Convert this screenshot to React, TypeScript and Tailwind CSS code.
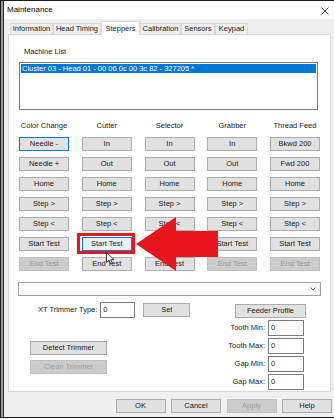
import React from 'react';

type BtnState = 'normal' | 'disabled' | 'focus' | 'hover';

interface BtnProps {
  label: string;
  state?: BtnState;
  className?: string;
}

// Classic WinForms push button, scaled down
const Btn: React.FC<BtnProps> = ({ label, state = 'normal', className = 'w-[50px] h-[14px]' }) => {
  const look =
    state === 'disabled'
      ? 'bg-[#cccccc] border-[#bfbfbf] text-[#9a9a9a]'
      : state === 'focus'
        ? 'bg-[#e1e1e1] border-[#0078d7] text-[#1a1a1a]'
        : state === 'hover'
          ? 'bg-[#e5f1fb] border-[#0078d7] text-[#1a1a1a]'
          : 'bg-[#e1e1e1] border-[#adadad] text-[#1a1a1a]';
  return (
    <div className={`${className} ${look} shrink-0 flex items-center justify-center border leading-none whitespace-nowrap`}>
      {label}
    </div>
  );
};

const TextBox: React.FC<{ value: string; className?: string }> = ({ value, className = 'w-[36px] h-[16px]' }) => (
  <div className={`${className} shrink-0 flex items-center border border-[#7a7a7a] bg-white pl-[2px] leading-none`}>{value}</div>
);

const columns: { title: string; items: { label: string; state?: BtnState }[] }[] = [
  {
    title: 'Color Change',
    items: [
      { label: 'Needle -', state: 'focus' },
      { label: 'Needle +' },
      { label: 'Home' },
      { label: 'Step >' },
      { label: 'Step <' },
      { label: 'Start Test' },
      { label: 'End Test', state: 'disabled' },
    ],
  },
  {
    title: 'Cutter',
    items: [
      { label: 'In' },
      { label: 'Out' },
      { label: 'Home' },
      { label: 'Step >' },
      { label: 'Step <' },
      { label: 'Start Test', state: 'hover' },
      { label: 'End Test' },
    ],
  },
  {
    title: 'Selector',
    items: [
      { label: 'In' },
      { label: 'Out' },
      { label: 'Home' },
      { label: 'Step >' },
      { label: 'Step <' },
      { label: 'Start Test' },
      { label: 'End Test' },
    ],
  },
  {
    title: 'Grabber',
    items: [
      { label: 'In' },
      { label: 'Out' },
      { label: 'Home' },
      { label: 'Step >' },
      { label: 'Step <' },
      { label: 'Start Test' },
      { label: 'End Test', state: 'disabled' },
    ],
  },
  {
    title: 'Thread Feed',
    items: [
      { label: 'Bkwd 200' },
      { label: 'Fwd 200' },
      { label: 'Home' },
      { label: 'Step >' },
      { label: 'Step <' },
      { label: 'Start Test' },
      { label: 'End Test', state: 'disabled' },
    ],
  },
];

const tabs = [
  { label: 'Information', w: 'w-[43px]' },
  { label: 'Head Timing', w: 'w-[48px]' },
  { label: 'Steppers', w: 'w-[39px]', active: true },
  { label: 'Calibration', w: 'w-[41px]' },
  { label: 'Sensors', w: 'w-[34px]' },
  { label: 'Keypad', w: 'w-[33px]' },
];

export default function App() {
  return (
    <div className="relative w-[334px] h-[419px] bg-white font-['Liberation_Sans',Arial,sans-serif] text-[7.5px] text-[#1a1a1a]">
      {/* window frame */}
      <div className="w-[334px] h-[418px] flex flex-col border-t border-b border-l border-[#1a1a1a] pl-[2px] bg-[#9a9a9a]">
        <div className="flex-1 flex flex-col border-l border-[#2a2a2a] bg-[#f0f0f0]">
          {/* title bar */}
          <div className="h-[18px] flex items-center justify-between bg-white pl-[3px] pr-[5px]">
            <span className="text-[8px] text-black">Maintenance</span>
            <svg width="8" height="8" viewBox="0 0 8 8" className="mt-[1px]">
              <path d="M0.5 0.5 L7.5 7.5 M7.5 0.5 L0.5 7.5" stroke="#333" strokeWidth="0.9" />
            </svg>
          </div>

          {/* tab strip */}
          <div className="mt-[2px] h-[14px] flex items-end pl-[6px]">
            {tabs.map((t) =>
              t.active ? (
                <div
                  key={t.label}
                  className={`${t.w} relative z-10 h-[14px] flex items-center justify-center bg-white border border-b-0 border-[#d9d9d9] leading-none`}
                >
                  {t.label}
                </div>
              ) : (
                <div
                  key={t.label}
                  className={`${t.w} h-[11px] mb-px flex items-center justify-center bg-[#f0f0f0] border border-b-0 border-[#d9d9d9] leading-none`}
                >
                  {t.label}
                </div>
              ),
            )}
          </div>

          {/* tab page */}
          <div className="-mt-px ml-[4px] w-[323px] h-[358px] border border-[#d9d9d9] bg-white flex flex-col">
            <div className="pt-[12px] pl-[15px] leading-[10px] h-[22px]">Machine List</div>
            <div className="ml-[10px] mt-[5px] w-[299px] h-[48px] border border-[#7a7a7a] bg-white p-px">
              <div className="h-[9px] bg-[#0078d7] text-white leading-[9px] pl-px whitespace-nowrap">
                Cluster 03 - Head 01 - 00 06 0c 00 3c 82 - 327205 *
              </div>
            </div>

            {/* stepper columns */}
            <div className="ml-[10px] mt-[11px] flex gap-x-[12.75px]">
              {columns.map((c) => (
                <div key={c.title} className="w-[50px] flex flex-col">
                  <div className="h-[10px] leading-[10px] text-center whitespace-nowrap">{c.title}</div>
                  <div className="mt-[6px] flex flex-col gap-[6px]">
                    {c.items.map((b, i) => (
                      <Btn key={i} label={b.label} state={b.state} />
                    ))}
                  </div>
                </div>
              ))}
            </div>

            {/* combo */}
            <div className="ml-[9px] mt-[11px] w-[303px] h-[14px] border border-[#a0a0a0] bg-white flex items-center justify-end pr-[4px]">
              <svg width="6" height="4" viewBox="0 0 6 4">
                <path d="M0.5 0.5 L3 3 L5.5 0.5" fill="none" stroke="#444" strokeWidth="0.8" />
              </svg>
            </div>

            {/* trimmer / feeder */}
            <div className="mt-[6px] flex">
              <div className="ml-[21px] w-[160px] flex flex-col">
                <div className="h-[16px] pl-[8px] flex items-center">
                  <span className="leading-none whitespace-nowrap">XT Trimmer Type:</span>
                  <TextBox value="0" className="ml-[3px] w-[35px] h-[16px]" />
                  <Btn label="Set" className="ml-[8px] w-[47px] h-[14px]" />
                </div>
                <Btn label="Detect Trimmer" className="mt-[23px] w-[77px] h-[14px]" />
                <Btn label="Clean Trimmer" state="disabled" className="mt-[5px] w-[77px] h-[14px]" />
              </div>
              <div className="ml-[45px] w-[71px] flex flex-col">
                <Btn label="Feeder Profile" className="mt-[2px] w-[71px] h-[14px]" />
                <div className="mt-[2px] flex flex-col gap-[2px]">
                  {['Tooth Min:', 'Tooth Max:', 'Gap Min:', 'Gap Max:'].map((l) => (
                    <div key={l} className="h-[16px] flex items-center justify-end gap-[3px] pr-[2px]">
                      <span className="leading-none whitespace-nowrap">{l}</span>
                      <TextBox value="0" />
                    </div>
                  ))}
                </div>
              </div>
            </div>
          </div>

          {/* dialog buttons */}
          <div className="mt-[7px] flex justify-end gap-[5.5px] pr-[2px]">
            <Btn label="OK" />
            <Btn label="Cancel" />
            <Btn label="Apply" state="disabled" />
            <Btn label="Help" />
          </div>
        </div>
      </div>

      {/* annotation: red highlight box */}
      <div className="absolute left-[77px] top-[233px] w-[58px] h-[21px] border-[3px] border-[#e8161f]" />

      {/* annotation: red arrow */}
      <svg className="absolute left-0 top-0" width="334" height="419" viewBox="0 0 334 419">
        <polygon points="136,244 176,217 176,231 218,231 218,257 176,257 176,271" fill="#e8161f" />
      </svg>

      {/* mouse cursor */}
      <svg className="absolute left-[106px] top-[252px]" width="9" height="13" viewBox="0 0 9 13">
        <path d="M0.5 0.5 L0.5 10.5 L3 8.2 L4.8 12 L6.4 11.3 L4.7 7.6 L8 7.6 Z" fill="#fff" stroke="#111" strokeWidth="0.8" strokeLinejoin="round" />
      </svg>
    </div>
  );
}
